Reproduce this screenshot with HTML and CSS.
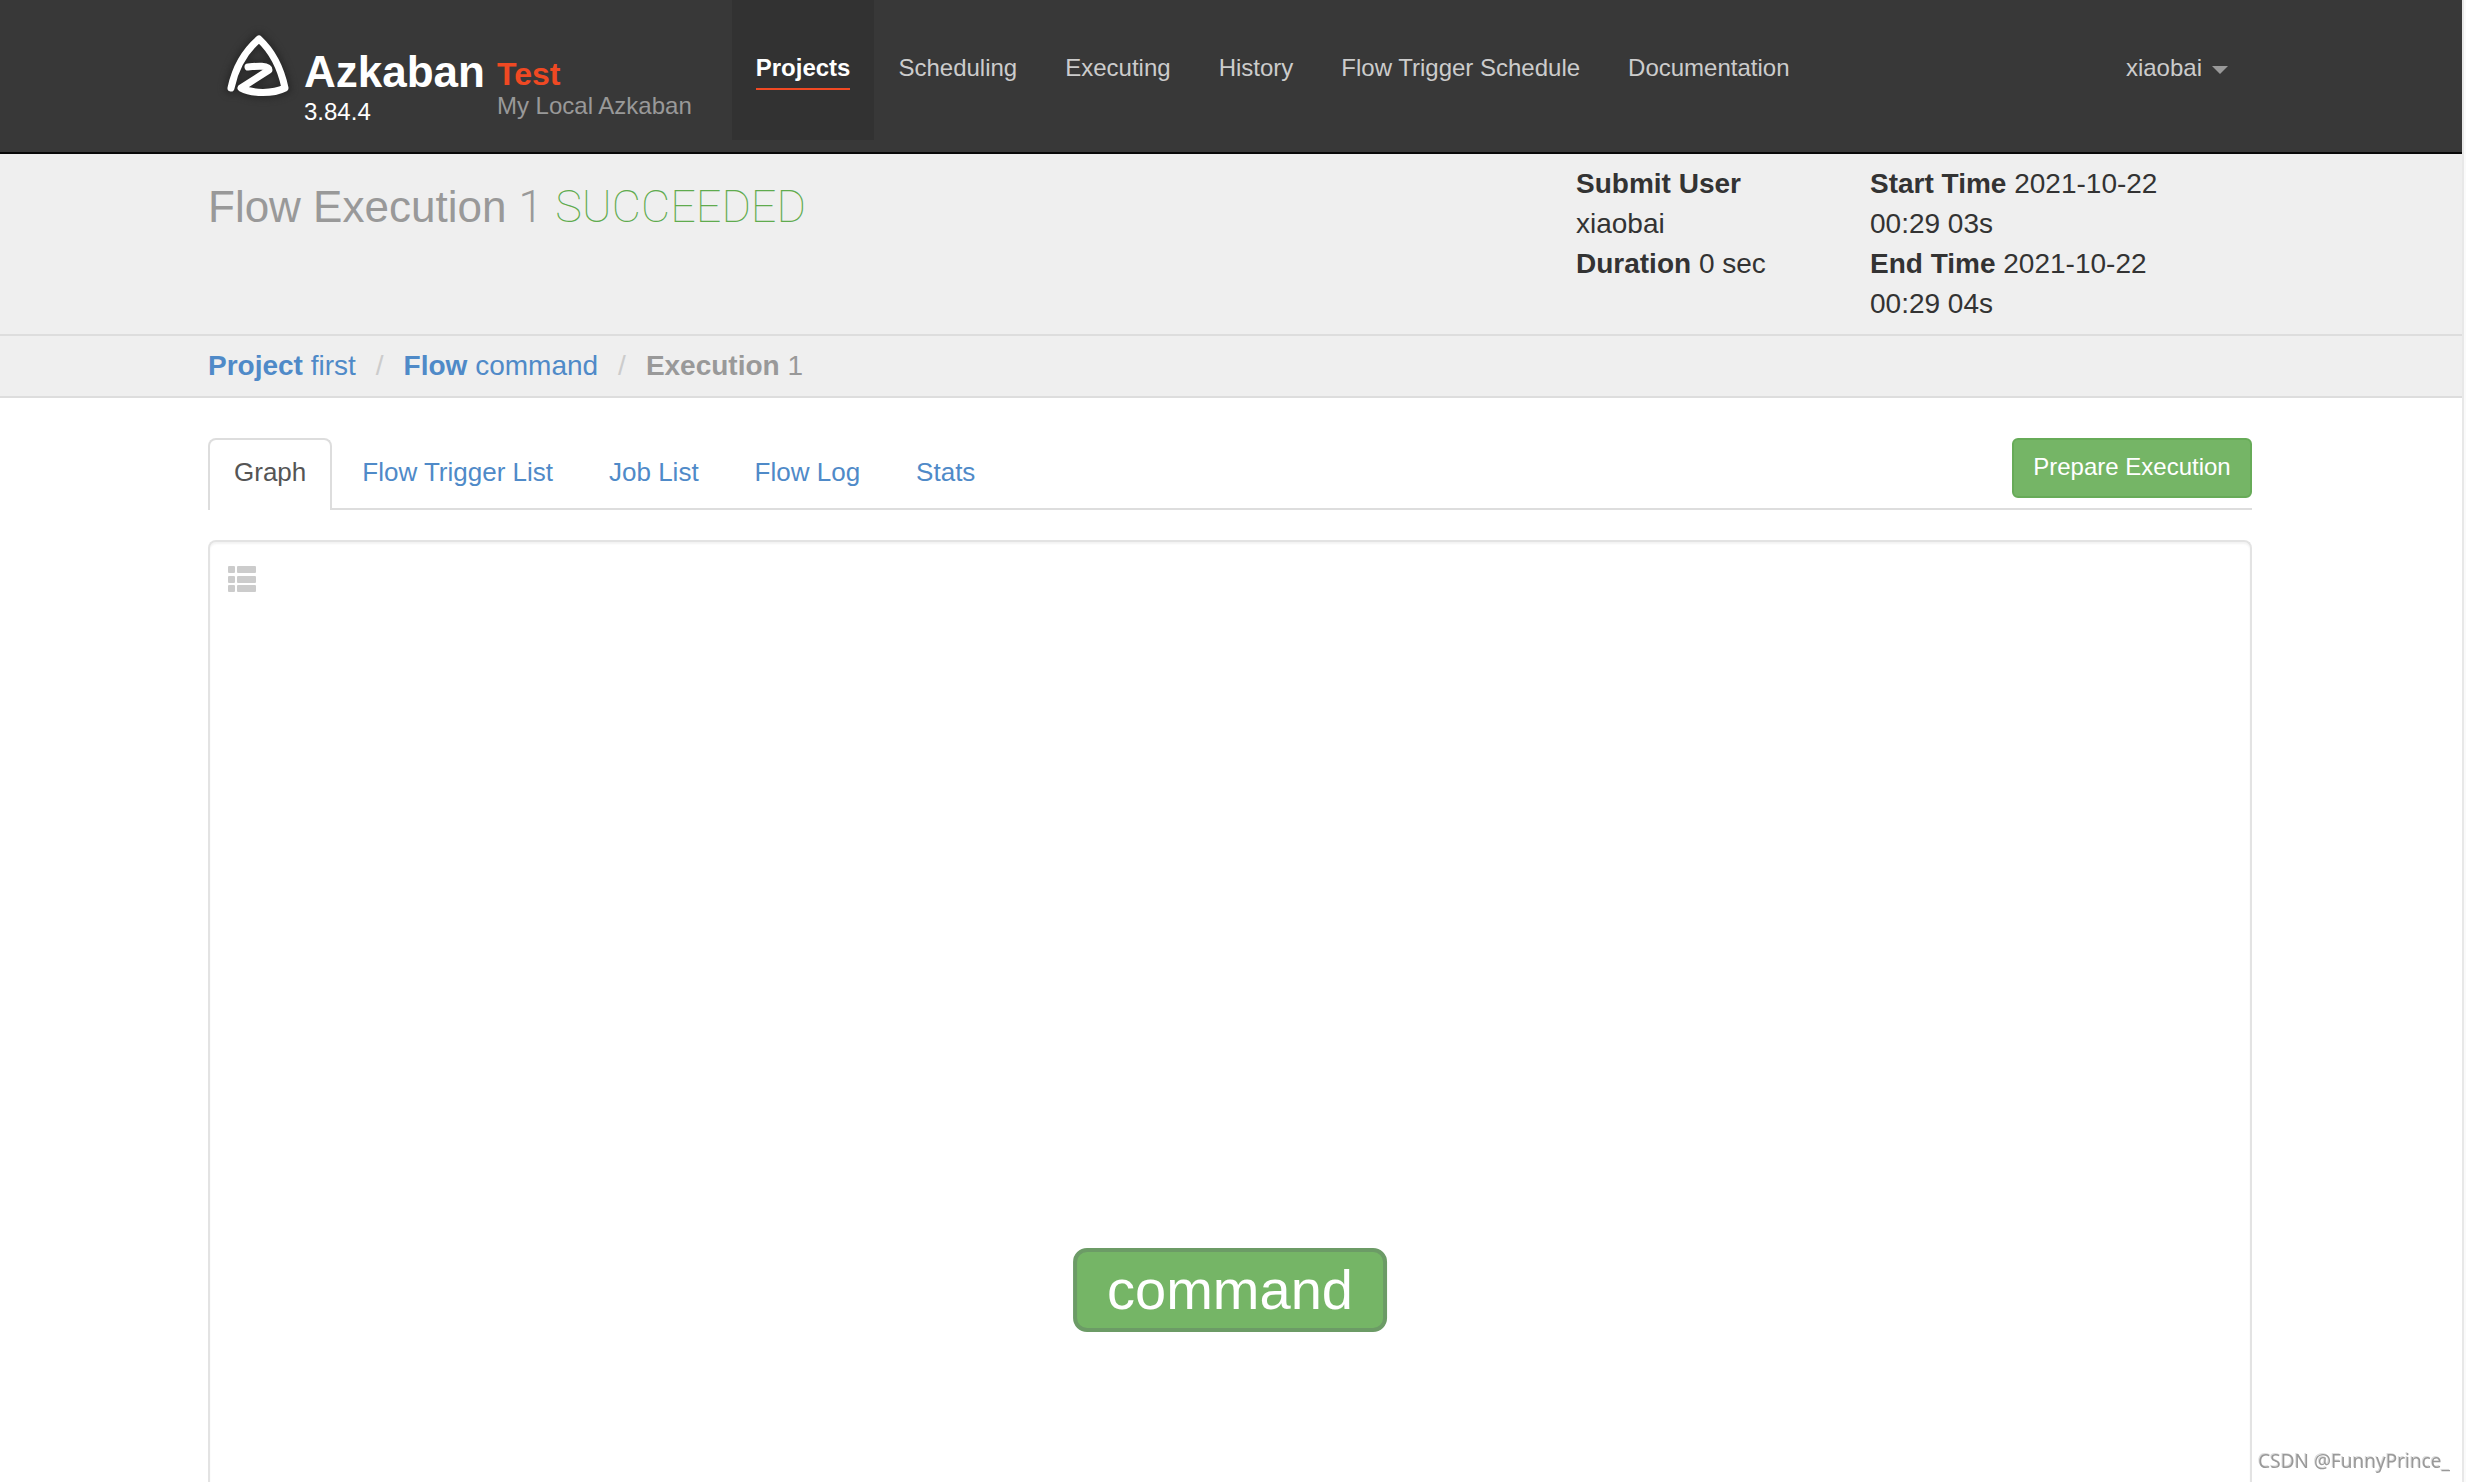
FILE: index.html
```html
<!DOCTYPE html>
<html lang="en">
<head>
<meta charset="utf-8">
<title>Azkaban - Flow Execution 1</title>
<link rel="stylesheet" href="styles.css">
</head>
<body>
<div class="page">
  <header class="navbar">
    <div class="container navbar-inner">
      <a class="brand" href="#">
        <svg class="brand-logo" viewBox="0 0 84 84" aria-hidden="true">
          <g fill="none" stroke-linecap="round" stroke-linejoin="round">
            <path class="logo-shade" d="M15 64C19 45 29 27 43 15C56 27 65 45 69 64C57 70 37 70 25 64L53 46C53 41 41 42 32 43"/>
            <path class="logo-line" d="M15 64C19 45 29 27 43 15C56 27 65 45 69 64C57 70 37 70 25 64L53 46C53 41 41 42 32 43"/>
          </g>
        </svg>
        <span class="brand-text">
          <span class="brand-name">Azkaban</span>
          <span class="brand-version">3.84.4</span>
        </span>
      </a>
      <div class="instance">
        <span class="instance-name">Test</span>
        <span class="instance-label">My Local Azkaban</span>
      </div>
      <nav class="menu">
        <a class="menu-link active" href="#"><span>Projects</span></a>
        <a class="menu-link" href="#"><span>Scheduling</span></a>
        <a class="menu-link" href="#"><span>Executing</span></a>
        <a class="menu-link" href="#"><span>History</span></a>
        <a class="menu-link" href="#"><span>Flow Trigger Schedule</span></a>
        <a class="menu-link" href="#"><span>Documentation</span></a>
      </nav>
      <a class="menu-link user" href="#"><span>xiaobai</span><i class="caret"></i></a>
    </div>
  </header>

  <section class="page-header">
    <div class="container header-inner">
      <h1 class="title">Flow Execution <span class="exec-id">1</span> <span class="status">SUCCEEDED</span></h1>
      <div class="meta meta-user">
        <p><strong>Submit User</strong> xiaobai</p>
        <p><strong>Duration</strong> 0 sec</p>
      </div>
      <div class="meta meta-time">
        <p><strong>Start Time</strong> 2021-10-22 00:29 03s</p>
        <p><strong>End Time</strong> 2021-10-22 00:29 04s</p>
      </div>
    </div>
  </section>

  <nav class="crumbs">
    <ol class="container crumb-list">
      <li><a href="#"><strong>Project</strong> first</a></li>
      <li><a href="#"><strong>Flow</strong> command</a></li>
      <li class="current"><strong>Execution</strong> 1</li>
    </ol>
  </nav>

  <main class="container main">
    <div class="tabs">
      <a class="tab active" href="#">Graph</a>
      <a class="tab" href="#">Flow Trigger List</a>
      <a class="tab" href="#">Job List</a>
      <a class="tab" href="#">Flow Log</a>
      <a class="tab" href="#">Stats</a>
      <button class="btn" type="button">Prepare Execution</button>
    </div>
    <div class="graph">
      <button class="list-toggle" type="button" aria-label="Show job list">
        <svg viewBox="0 0 28 26" aria-hidden="true">
          <g fill="#cccccc">
            <rect x="0" y="0" width="7" height="7" rx="1"/><rect x="9" y="0" width="19" height="7" rx="1"/>
            <rect x="0" y="10" width="7" height="7" rx="1"/><rect x="9" y="10" width="19" height="7" rx="1"/>
            <rect x="0" y="19" width="7" height="7" rx="1"/><rect x="9" y="19" width="19" height="7" rx="1"/>
          </g>
        </svg>
      </button>
      <div class="node">command</div>
    </div>
  </main>
</div>
<div class="watermark">CSDN @FunnyPrince_</div>
</body>
</html>
```
FILE: styles.css
```css
* { box-sizing: border-box; }
html { height: 100%; background: #fafafa; }
body {
  margin: 0;
  height: 100%;
  padding-right: 2px;
  overflow: hidden;
  font-family: "Liberation Sans", Arial, sans-serif;
  font-size: 28px;
  line-height: 40px;
  color: #333;
}
a { color: #4f8ac8; text-decoration: none; }
p { margin: 0; }
.page {
  display: flex;
  flex-direction: column;
  min-height: 100%;
  border-right: 2px solid #e8e8e8;
  background: #fff;
}
.container { width: 100%; max-width: 2046px; margin: 0 auto; padding-right: 2px; }

/* top bar */
.navbar { background: #383838; border-bottom: 2px solid #080808; }
.navbar-inner { display: flex; align-items: flex-start; height: 152px; }
.brand { display: flex; padding: 24px 0 0 8px; color: #fff; }
.brand-logo { width: 84px; height: 84px; }
.logo-shade { stroke: #2a2a2a; stroke-width: 13; filter: blur(3px); }
.logo-line { stroke: #fff; stroke-width: 7; }
.brand-text { display: flex; flex-direction: column; padding: 24px 12px 0 4px; }
.brand-name { font-size: 44px; font-weight: bold; line-height: 48px; }
.brand-version { font-size: 24px; line-height: 32px; }
.instance { display: flex; flex-direction: column; padding-top: 56px; margin-right: 40px; }
.instance-name { font-size: 32px; font-weight: bold; line-height: 36px; color: #f04923; }
.instance-label { font-size: 24px; line-height: 28px; color: #999; }
.menu { display: flex; }
.menu-link {
  display: flex;
  align-items: flex-start;
  height: 140px;
  padding: 48px 24px 0;
  font-size: 24px;
  color: #ccc;
}
.menu-link.active { background: #323232; color: #fff; font-weight: bold; }
.menu-link.active span { border-bottom: 2px solid #f04923; }
.user { margin-left: auto; }
.caret {
  margin: 18px 0 0 10px;
  border: 8px solid transparent;
  border-top-color: #999;
  border-bottom: 0;
}

/* execution summary */
.page-header { background: #efefef; border-bottom: 2px solid #ddd; }
.header-inner { display: flex; padding-top: 10px; padding-bottom: 10px; }
.title { flex: 1; margin: 19px 0 0; font-size: 44px; font-weight: normal; line-height: 48px; color: #999; }
.exec-id { font-family: Roboto, sans-serif; font-weight: 300; }
.status { font-family: Roboto, sans-serif; font-size: 45px; font-weight: 100; color: #5fab4e; }
.meta-user { width: 200px; margin-right: 94px; }
.meta-time { width: 322px; margin-right: 60px; }

.crumbs { background: #efefef; border-bottom: 2px solid #ddd; }
.crumb-list { display: flex; padding-top: 10px; padding-bottom: 10px; padding-left: 0; list-style: none; }
.crumb-list li + li::before { content: "/"; padding: 0 20px; color: #ccc; }
.crumb-list .current { color: #999; }

/* tabs and graph */
.main { flex: 1; display: flex; flex-direction: column; padding-top: 40px; }
.tabs { display: flex; align-items: flex-start; gap: 4px; height: 72px; border-bottom: 2px solid #ddd; }
.tab {
  height: 72px;
  padding: 12px 24px 0;
  border: 2px solid transparent;
  border-bottom: 0;
  border-radius: 8px 8px 0 0;
  font-size: 26px;
}
.tab.active { background: #fff; border-color: #ddd; color: #555; }
.btn {
  width: 240px;
  height: 60px;
  margin-left: auto;
  padding: 0 0 2px;
  border: 2px solid #67ab58;
  border-radius: 6px;
  background: #75b566;
  color: #fff;
  font: 24px "Liberation Sans", Arial, sans-serif;
}
.graph {
  position: relative;
  flex: 1;
  margin-top: 30px;
  padding: 24px 18px;
  border: 2px solid #e3e3e3;
  border-bottom: 0;
  border-radius: 8px 8px 0 0;
  box-shadow: inset 0 2px 2px rgba(0, 0, 0, 0.05);
}
.list-toggle { display: block; padding: 0; border: 0; background: none; }
.list-toggle svg { display: block; width: 28px; height: 26px; }
.node {
  position: absolute;
  bottom: 150px;
  left: 50%;
  transform: translateX(-50%);
  padding: 6px 30px;
  border: 4px solid #6c9b66;
  border-radius: 14px;
  background: #75b566;
  color: #fff;
  font-size: 56px;
  line-height: 64px;
}
.watermark {
  position: fixed;
  right: 16px;
  bottom: 6px;
  font: 19px/30px "Noto Sans", "Open Sans", sans-serif;
  color: #999;
  text-shadow: -1px -1px 0 #ddd;
}
```
